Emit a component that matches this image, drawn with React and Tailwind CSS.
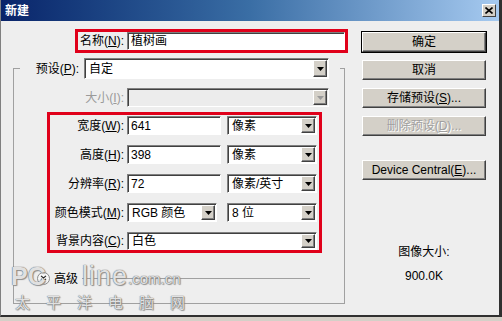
import React from 'react';

const font = "font-['Liberation_Sans','Noto_Sans_CJK_SC',sans-serif]";

const Arrow = ({ disabled }) => (
  <div className="w-[14px] self-stretch bg-[#d4d0c8] border border-t-white border-l-white border-r-[#404040] border-b-[#404040] shadow-[inset_-1px_-1px_0_#808080] flex items-center justify-center">
    <svg width="7" height="4" viewBox="0 0 7 4">
      <path d="M0 0H7L3.5 4Z" fill={disabled ? '#9a9a9a' : '#000'} />
    </svg>
  </div>
);

const Sunken = ({ className = '', disabled, children }) => (
  <div
    className={`flex items-stretch border border-t-[#808080] border-l-[#808080] border-r-white border-b-white shadow-[inset_1px_1px_0_#404040] ${
      disabled ? 'bg-[#ececec]' : 'bg-white'
    } ${className}`}
  >
    {children}
  </div>
);

const Select = ({ value, className = '', disabled }) => (
  <Sunken className={className} disabled={disabled}>
    <div className="flex-1 flex items-center pl-[4px] text-[12px] text-black leading-none">{value}</div>
    <div className="flex py-[1px] pr-[1px]">
      <Arrow disabled={disabled} />
    </div>
  </Sunken>
);

const Input = ({ value, className = '' }) => (
  <Sunken className={className}>
    <div className="flex-1 flex items-center pl-[3px] text-[12px] text-black leading-none">{value}</div>
  </Sunken>
);

const Label = ({ text, hot, className = '', disabled }) => (
  <div className={`text-right text-[12px] leading-none ${disabled ? 'text-[#9a9a9a]' : 'text-black'} ${className}`}>
    {text}(<span className="underline">{hot}</span>):
  </div>
);

const Button = ({ children, primary, disabled, className = '' }) => (
  <div
    className={`h-[20px] w-[124px] flex items-center justify-center bg-[#d4d0c8] text-[12px] leading-none ${
      primary ? 'outline outline-1 outline-black' : ''
    } border border-t-white border-l-white border-r-[#404040] border-b-[#404040] shadow-[inset_-1px_-1px_0_#808080] ${
      disabled ? 'text-[#a0a0a0] [text-shadow:1px_1px_0_#fff]' : 'text-black'
    } ${className}`}
  >
    {children}
  </div>
);

const Row = ({ label, hot, children, className = '' }) => (
  <div className={`flex items-stretch ${className}`}>
    <Label text={label} hot={hot} className="w-[74px] self-center" />
    <div className="ml-[3px] flex gap-[6px]">{children}</div>
  </div>
);

const wm = "text-white/80 [text-shadow:0_0_1px_#666,0_0_1px_#666,1px_1px_1px_#999]";

export default function App() {
  return (
    <div className={`w-[502px] h-[321px] bg-[#d4d0c8] overflow-hidden relative ${font}`}>
      <div className="h-[317px] flex flex-col border-l border-l-[#808080] border-r-[3px] border-r-[#303030] border-b-2 border-b-[#303030]">
        {/* title bar */}
        <div className="h-[21px] flex items-center justify-between pl-[4px] pr-[3px] bg-gradient-to-r from-[#0a246a] via-[#3a6ea5] to-[#a6caf0]">
          <span className="text-white font-bold text-[12px] leading-none">新建</span>
          <div className="w-[14px] h-[13px] bg-[#d4d0c8] border border-t-white border-l-white border-r-[#404040] border-b-[#404040] flex items-center justify-center">
            <svg width="8" height="7" viewBox="0 0 8 7">
              <path d="M0.5 0.5L7.5 6.5M7.5 0.5L0.5 6.5" stroke="#000" strokeWidth="1.6" />
            </svg>
          </div>
        </div>

        {/* body */}
        <div className="flex-1 flex bg-[#eeeeee]">
          {/* left column */}
          <div className="w-[344px] flex flex-col">
            <div className="mt-[8px] ml-[74px] w-[273px] h-[24px] border-[3px] border-[#e0001a] flex items-stretch">
              <Label text="名称" hot="N" className="w-[46px] self-center" />
              <Input value="植树画" className="ml-[3px] flex-1" />
            </div>

            <div className="mt-[5px] ml-[12px] w-[332px] flex flex-col">
              <div className="h-[21px] flex items-stretch">
                <div className="w-[7px] h-[11px] self-end border-t border-l border-[#a0a0a0]" />
                <Label text="预设" hot="P" className="w-[59px] self-center" />
                <Select value="自定" className="ml-[5px] w-[245px]" />
                <div className="flex-1" />
                <div className="w-[5px] h-[11px] self-end border-t border-r border-[#a0a0a0]" />
              </div>

              <div className="border-l border-r border-b border-[#a0a0a0] flex flex-col pb-[18px]">
                <div className="mt-[9px] h-[19px] flex items-stretch">
                  <Label text="大小" hot="I" disabled className="w-[110px] self-center" />
                  <Select value="" disabled className="ml-[3px] w-[202px]" />
                </div>

                <div className="mt-[5px] ml-[33px] w-[275px] border-[3px] border-[#e0001a] pt-[1px] flex flex-col gap-[10px]">
                  <Row label="宽度" hot="W" className="h-[19px]">
                    <Input value="641" className="w-[94px]" />
                    <Select value="像素" className="w-[90px]" />
                  </Row>
                  <Row label="高度" hot="H" className="h-[19px]">
                    <Input value="398" className="w-[94px]" />
                    <Select value="像素" className="w-[90px]" />
                  </Row>
                  <Row label="分辨率" hot="R" className="h-[19px]">
                    <Input value="72" className="w-[94px]" />
                    <Select value="像素/英寸" className="w-[90px]" />
                  </Row>
                  <Row label="颜色模式" hot="M" className="h-[19px]">
                    <Select value="RGB 颜色" className="w-[90px]" />
                    <Select value="8 位" className="ml-[4px] w-[90px]" />
                  </Row>
                  <Row label="背景内容" hot="C" className="h-[18px]">
                    <Select value="白色" className="w-[190px]" />
                  </Row>
                </div>

                <div className="mt-[19px] ml-[23px] h-[13px] flex items-center">
                  <svg width="13" height="13" viewBox="0 0 13 13">
                    <circle cx="6.5" cy="6.5" r="6" fill="#f6f6f6" stroke="#8a8a8a" />
                    <path d="M4 3.8L6.5 6L9 3.8M4 6.8L6.5 9L9 6.8" fill="none" stroke="#222" strokeWidth="1.1" />
                  </svg>
                  <span className="ml-[4px] text-[12px] leading-none text-black">高级</span>
                  <div className="ml-[4px] flex-1 h-0 border-t border-[#a0a0a0] mr-[34px]" />
                </div>
              </div>
            </div>
          </div>

          {/* right column */}
          <div className="ml-[17px] mt-[11px] w-[124px] flex flex-col">
            <div className="flex flex-col gap-[8px]">
              <Button primary>确定</Button>
              <Button>取消</Button>
              <Button>
                存储预设(<span className="underline">S</span>)...
              </Button>
              <Button disabled>
                删除预设(<span className="underline">D</span>)...
              </Button>
            </div>
            <Button className="mt-[24px]">
              Device Central(<span className="underline">E</span>)...
            </Button>
            <div className="mt-[65px] text-center text-[12px] leading-[14px] text-black">图像大小:</div>
            <div className="mt-[10px] text-center text-[12px] leading-[14px] text-black">900.0K</div>
          </div>
        </div>
      </div>

      {/* watermark */}
      <div className={`absolute left-[11px] top-[262px] leading-[28px] pointer-events-none text-[25px] font-bold font-['Liberation_Sans',sans-serif] ${wm}`}>
        PC
      </div>
      <div className={`absolute left-[82px] top-[262px] h-[28px] pointer-events-none flex items-end font-['Liberation_Sans',sans-serif] ${wm}`}>
        <span className="text-[27px] leading-[28px] tracking-[1px]">line</span>
        <span className="text-[15px] leading-[17px] mb-[3px]">.com.cn</span>
      </div>
      <div className={`absolute left-[15px] top-[291px] leading-[21px] pointer-events-none text-[15px] tracking-[16px] font-['Noto_Sans_CJK_SC',sans-serif] ${wm}`}>
        太平洋电脑网
      </div>
    </div>
  );
}
